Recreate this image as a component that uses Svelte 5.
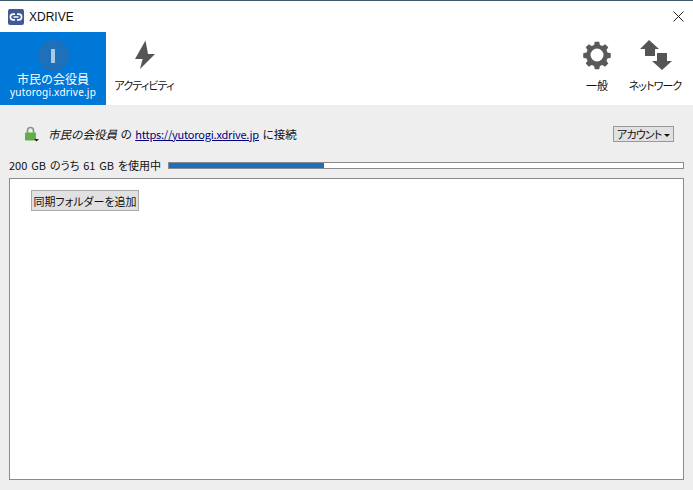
<script>
  const used = 30.2;
</script>

<div class="win">
  <div class="edge"></div>
  <header class="title">
    <svg class="logo" viewBox="0 0 16 16" width="16" height="16">
      <rect width="16" height="16" rx="2" fill="#3f5a94"/>
      <path d="M7 5.200H5.200a2.800 2.800 0 0 0 0 5.600H7M9 5.200h1.800a2.800 2.800 0 0 1 0 5.600H9M5.500 8h5" fill="none" stroke="#fff" stroke-width="1.700"/>
    </svg>
    <span class="appname">XDRIVE</span>
    <svg class="close" viewBox="0 0 11 11" width="11" height="11">
      <path d="M.5.5l10 10M10.500.5l-10 10" stroke="#222" stroke-width="1" fill="none"/>
    </svg>
  </header>

  <nav class="tools">
    <div class="tab active">
      <div class="avatar"><span class="glyph"></span></div>
      <div class="tabname">市民の会役員</div>
      <div class="tabsub">yutorogi.xdrive.jp</div>
    </div>
    <div class="tab second">
      <svg class="ic" viewBox="0 0 32 32" width="32" height="32">
        <path d="M17.500 1.500 L7 20 L14.600 20 L12 30 L27 15 L20 15 Z" fill="#555"/>
      </svg>
      <div class="lbl tight">アクティビティ</div>
    </div>
    <div class="spacer"></div>
    <div class="tab gen">
      <svg class="ic" viewBox="-2 -2 36 36" width="32" height="32">
        <path fill="#5a5a5a" fill-rule="evenodd" d="M13.500 2h5l.8 3.700 2.700 1.100 3.200-2 3.500 3.500-2 3.200 1.100 2.700 3.700.8v5l-3.700.8-1.100 2.700 2 3.200-3.500 3.500-3.200-2-2.700 1.100-.8 3.700h-5l-.8-3.700-2.700-1.100-3.200 2-3.500-3.500 2-3.200-1.100-2.700-3.700-.8v-5l3.700-.8 1.100-2.700-2-3.200 3.500-3.500 3.200 2 2.700-1.100zM16 9.700a7.300 7.300 0 1 0 0 14.600 7.300 7.300 0 0 0 0-14.600z" transform="translate(0 -1)"/>
      </svg>
      <div class="lbl">一般</div>
    </div>
    <div class="tab net">
      <svg class="ic arrows" viewBox="0 0 32 32" width="32" height="32">
        <path fill="#555" d="M10 1 L1 10 L6 10 L6 17 L16 17 L16 10 L20 10 Z"/>
        <path fill="#555" d="M18 14 L28 14 L28 22 L33 22 L23 31 L13 22 L18 22 Z"/>
      </svg>
      <div class="lbl tight">ネットワーク</div>
    </div>
  </nav>

  <main class="body">
    <div class="conn">
      <svg class="lock" viewBox="0 0 16 16" width="16" height="16">
        <path d="M4.500 7V4.500a3 3 0 0 1 6 0V7" fill="none" stroke="#7f9a78" stroke-width="1.600"/>
        <rect x="2" y="6.500" width="11" height="8" rx="1" fill="#62ad4c"/>
        <path d="M11 13h5l-2.500 2.500z" fill="#222"/>
      </svg>
      <p class="conntext"><em>市民の会役員</em> の <a href="#top">https://yutorogi.xdrive.jp</a> に接続</p>
      <button class="acct">アカウント<span class="caret"></span></button>
    </div>

    <div class="usage">
      <span>200 GB のうち 61 GB を使用中</span>
      <div class="bar"><div class="fill" style="width: {used}%"></div></div>
    </div>

    <section class="box">
      <button class="add">同期フォルダーを追加</button>
    </section>
  </main>
</div>

<style>
  :global(body) {
    margin: 0;
    background: #eeeeee;
  }
  .win {
    width: 693px;
    height: 490px;
    display: flex;
    flex-direction: column;
    overflow: hidden;
    font-family: "Noto Sans CJK JP", "Liberation Sans", sans-serif;
    font-feature-settings: "palt";
    color: #111;
    font-size: 11px;
    background: #eeeeee;
  }
  .edge {
    height: 1px;
    background: #3d5a6a;
    flex: none;
  }
  .title {
    height: 31px;
    flex: none;
    background: #fff;
    display: flex;
    align-items: center;
    padding: 0 9px 0 8px;
    box-sizing: border-box;
  }
  .logo { margin-right: 5px; }
  .appname {
    font-family: "Liberation Sans", sans-serif;
    font-size: 12px;
    flex: 1;
  }
  .tools {
    height: 73px;
    flex: none;
    background: #fff;
    display: flex;
  }
  .tab {
    display: flex;
    flex-direction: column;
    align-items: center;
  }
  .spacer { flex: 1; }
  .active {
    width: 106px;
    background: #0078d7;
    color: #fff;
  }
  .avatar {
    width: 31px;
    height: 31px;
    border-radius: 50%;
    background: #1f70ba;
    margin-top: 8px;
    display: flex;
    align-items: center;
    justify-content: center;
  }
  .glyph {
    width: 4px;
    height: 14px;
    background: #a9cbe6;
  }
  .tabname {
    font-size: 12px;
    line-height: 14px;
    margin-top: 1px;
    font-feature-settings: normal;
  }
  .tabsub {
    font-family: "Noto Sans", sans-serif;
    font-size: 10px;
    line-height: 12px;
    letter-spacing: 0.2px;
  }
  .second { width: 76px; }
  .gen { width: 56px; }
  .net { width: 60px; margin-right: 8px; }
  .ic { margin-top: 7px; }
  .arrows { overflow: visible; }
  .lbl {
    font-size: 11px;
    line-height: 14px;
    margin-top: 7px;
    white-space: nowrap;
  }
  .tight { letter-spacing: -0.9px; }
  .body {
    flex: 1;
    display: flex;
    flex-direction: column;
    padding: 0 9px 10px 9px;
    min-height: 0;
  }
  .conn {
    height: 57px;
    flex: none;
    display: flex;
    align-items: center;
    padding: 0 10px 0 14px;
  }
  .lock { margin-right: 9px; }
  .conntext {
    flex: 1;
    margin: 0;
    font-size: 11.500px;
    white-space: nowrap;
    word-spacing: 1px;
  }
  .conntext em { font-feature-settings: normal; }
  .conntext a {
    color: #000080;
    font-size: 11px;
    letter-spacing: -0.2px;
  }
  .acct {
    font: inherit;
    font-size: 11px;
    line-height: 14px;
    height: 16px;
    width: 61px;
    padding: 0 0 0 3px;
    margin-top: 1px;
    border: 1px solid #999;
    background: #e1e1e1;
    color: #111;
    white-space: nowrap;
    display: flex;
    align-items: center;
    letter-spacing: -0.8px;
  }
  .caret {
    width: 0;
    height: 0;
    margin-left: auto;
    margin-right: 3px;
    margin-top: 3px;
    border-left: 3px solid transparent;
    border-right: 3px solid transparent;
    border-top: 3px solid #111;
  }
  .usage {
    height: 16px;
    margin-top: -5px;
    margin-bottom: 5px;
    flex: none;
    display: flex;
    align-items: center;
    gap: 7px;
    white-space: nowrap;
    word-spacing: 1.400px;
  }
  .bar {
    flex: 1;
    height: 5px;
    background: #fff;
    border: 1px solid #8a8a8a;
  }
  .fill {
    height: 100%;
    background: #1a70bd;
  }
  .box {
    flex: 1;
    box-sizing: border-box;
    background: #fff;
    border: 1px solid #8a8a8a;
    padding: 11px 21px;
  }
  .add {
    display: block;
    font: inherit;
    font-size: 11px;
    line-height: 16px;
    height: 21px;
    width: 108px;
    padding: 0;
    border: 1px solid #aaa;
    background: #e1e1e1;
    color: #111;
    white-space: nowrap;
  }
</style>
